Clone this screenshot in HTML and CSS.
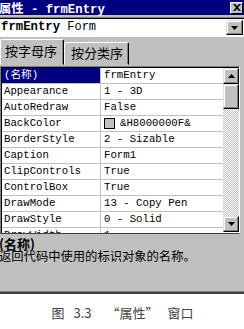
FILE: index.html
```html
<!DOCTYPE html>
<html lang="zh">
    <head>
        <meta charset="UTF-8">
        <title>属性 - frmEntry</title>
        <link rel="stylesheet" href="styles.css">
    </head>
<body>
    <div class="window">
        <div class="titlebar">
            <span class="title">属性 - frmEntry</span>
            <span class="close">
                <svg width="8" height="7" viewBox="0 0 8 7"><path d="M0 0h2l2 2 2-2h2L5 3.5 8 7H6L4 5 2 7H0l3-3.5z" fill="#000"/></svg>
            </span>
        </div>
        <div class="combo">
            <div class="combo-field"><b>frmEntry</b> Form</div>
            <div class="btn combo-btn">
                <svg width="7" height="4" viewBox="0 0 7 4"><path d="M0 0h7L3.5 4z" fill="#000"/></svg>
            </div>
        </div>
        <div class="tabs">
            <div class="tab active">按字母序</div>
            <div class="tab">按分类序</div>
        </div>
        <div class="grid">
            <div class="rows">
                <div class="row selected"><span class="name">(名称)</span><span class="value">frmEntry</span></div>
                <div class="row"><span class="name">Appearance</span><span class="value">1 - 3D</span></div>
                <div class="row"><span class="name">AutoRedraw</span><span class="value">False</span></div>
                <div class="row"><span class="name">BackColor</span><span class="value"><i class="swatch"></i>&amp;H8000000F&amp;</span></div>
                <div class="row"><span class="name">BorderStyle</span><span class="value">2 - Sizable</span></div>
                <div class="row"><span class="name">Caption</span><span class="value">Form1</span></div>
                <div class="row"><span class="name">ClipControls</span><span class="value">True</span></div>
                <div class="row"><span class="name">ControlBox</span><span class="value">True</span></div>
                <div class="row"><span class="name">DrawMode</span><span class="value">13 - Copy Pen</span></div>
                <div class="row"><span class="name">DrawStyle</span><span class="value">0 - Solid</span></div>
                <div class="row partial"><span class="name">DrawWidth</span><span class="value">1</span></div>
            </div>
            <div class="scrollbar">
                <div class="btn arrow">
                    <svg width="7" height="4" viewBox="0 0 7 4"><path d="M3.5 0L7 4H0z" fill="#000"/></svg>
                </div>
                <div class="btn thumb"></div>
                <div class="track"></div>
                <div class="btn arrow">
                    <svg width="7" height="4" viewBox="0 0 7 4"><path d="M0 0h7L3.5 4z" fill="#000"/></svg>
                </div>
            </div>
        </div>
        <div class="desc">
            <div class="desc-title">(名称)</div>
            <div class="desc-text">返回代码中使用的标识对象的名称。</div>
        </div>
    </div>
    <div class="figure">
        <span>图</span><span class="num">3.3</span><span class="quote">“属性”</span><span>窗口</span>
    </div>
</body>
</html>
```

FILE: styles.css
```css
body {
    margin: 0;
    background-color: #fff;
    width: 244px;
    overflow: hidden;
}
.window {
    background-color: #c0c0c0;
    height: 291px;
    border-bottom: 1px solid #808080;
    box-shadow: 0 2px 0 #404040;
    font-family: "Liberation Mono", "Noto Sans CJK SC", monospace;
}
.titlebar {
    height: 15px;
    background-color: #000080;
    display: flex;
    align-items: center;
    justify-content: space-between;
}
.title {
    color: #fff;
    font-weight: bold;
    font-size: 12.3px;
    margin-left: -1px;
    white-space: pre;
}
.close {
    width: 11px;
    height: 10px;
    margin-right: 1px;
    background-color: #c0c0c0;
    border: 1px solid;
    border-color: #fff #000 #000 #fff;
    display: flex;
    align-items: center;
    justify-content: center;
}
.btn {
    background-color: #c0c0c0;
    border: 1px solid;
    border-color: #dfdfdf #000 #000 #dfdfdf;
    box-shadow: inset -1px -1px 0 #808080, inset 1px 1px 0 #fff;
    box-sizing: border-box;
    display: flex;
    align-items: center;
    justify-content: center;
}
.combo {
    margin-top: 2px;
    height: 18px;
    display: flex;
    background-color: #fff;
    border-top: 1px solid #808080;
    box-shadow: inset 0 1px 0 #000;
    border-bottom: 1px solid #fff;
}
.combo-field {
    flex: 1;
    font-size: 12px;
    line-height: 18px;
    padding-left: 1px;
    color: #000;
}
.combo-field b {
    font-size: 12.3px;
}
.combo-btn {
    width: 17px;
    height: 15px;
    margin: 2px 1px 0 0;
}
.tabs {
    display: flex;
    height: 25px;
    margin-top: 3px;
    align-items: flex-end;
    font-family: "Noto Sans CJK SC", sans-serif;
    font-size: 13px;
}
.tab {
    height: 21px;
    line-height: 20px;
    padding: 0 5px 0 6px;
    border: 1px solid;
    border-color: #fff #000 transparent #fff;
    box-shadow: inset -1px 0 0 #808080;
    border-radius: 2px 2px 0 0;
    color: #000;
}
.tab.active {
    height: 24px;
    line-height: 22px;
    padding: 0 6px 0 4px;
}
.grid {
    margin-top: 1px;
    width: 240px;
    height: 168px;
    box-sizing: border-box;
    display: flex;
    border: 1px solid;
    border-color: #808080 #fff #404040 #808080;
    box-shadow: inset 1px 1px 0 #000;
    padding: 1px 0 0 1px;
    background-color: #fff;
}
.rows {
    flex: 1;
    overflow: hidden;
    font-size: 10.7px;
}
.row {
    display: grid;
    grid-template-columns: 99px 1fr;
    height: 15px;
    border-bottom: 1px solid #c0c0c0;
    line-height: 15px;
    color: #000;
}
.row.partial {
    height: 5px;
    overflow: hidden;
    border-bottom: none;
}
.name {
    padding-left: 2px;
    border-right: 1px solid #c0c0c0;
    white-space: nowrap;
}
.value {
    padding-left: 3px;
    display: flex;
    align-items: center;
    white-space: nowrap;
}
.partial .value {
    align-items: flex-start;
}
.selected .name {
    background-color: #000080;
    color: #fff;
}
.swatch {
    width: 9px;
    height: 9px;
    border: 1px solid #000;
    background-color: #c0c0c0;
    margin-right: 5px;
}
.scrollbar {
    width: 16px;
    display: flex;
    flex-direction: column;
    padding-bottom: 1px;
}
.arrow {
    height: 16px;
}
.thumb {
    height: 25px;
}
.track {
    flex: 1;
    background: repeating-conic-gradient(#c0c0c0 0 25%, #fff 0 50%) 0 0 / 2px 2px;
}
.desc {
    padding-top: 4px;
    font-family: "Noto Sans CJK SC", sans-serif;
    color: #000;
}
.desc-title {
    font-weight: bold;
    font-size: 13px;
    line-height: 11px;
    margin-left: -1px;
}
.desc-text {
    font-size: 12.3px;
    line-height: 12px;
    margin-top: 1px;
    margin-left: -1px;
}
.figure {
    margin-top: 14px;
    display: flex;
    justify-content: center;
    font-family: "Noto Sans CJK SC", sans-serif;
    font-size: 13px;
    line-height: 14px;
    color: #444;
    padding-left: 1px;
}
.num {
    margin: 0 15px 0 9px;
}
.quote {
    margin-right: 9px;
}
```
